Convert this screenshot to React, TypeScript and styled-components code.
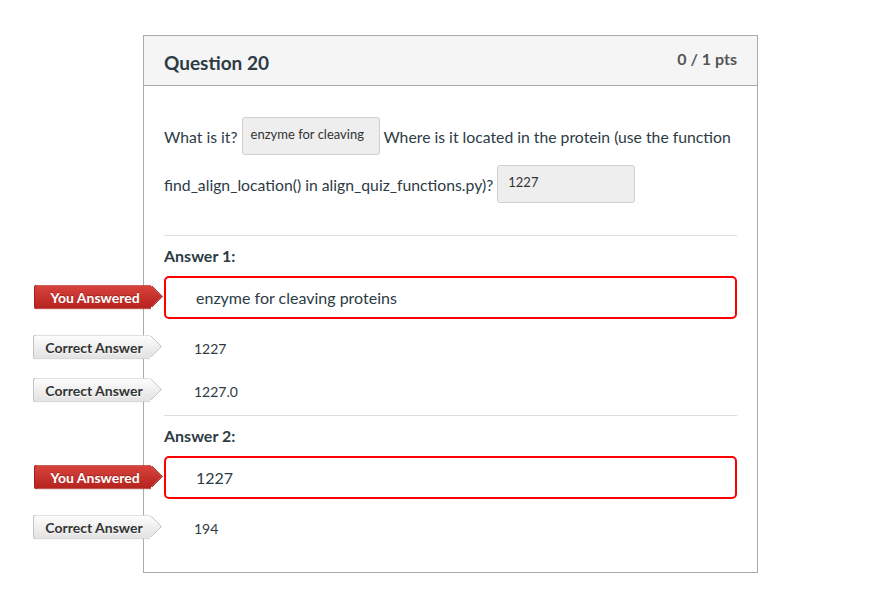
import React from "react";
import styled, { createGlobalStyle, css } from "styled-components";

const Global = createGlobalStyle`
  html, body { margin: 0; padding: 0; background: #ffffff; }
  body { font-family: Lato, "Noto Sans", sans-serif; color: #2d3b45; }
`;

const Page = styled.div`
  padding: 35px 0 0 143px;
`;

const Card = styled.div`
  box-sizing: border-box;
  width: 615px;
  border: 1px solid #aaaaaa;
  background: #ffffff;
`;

const Header = styled.div`
  box-sizing: border-box;
  height: 50px;
  display: flex;
  justify-content: space-between;
  align-items: flex-start;
  padding: 14px 20px 0 20px;
  background: #f5f5f5;
  border-bottom: 1px solid #aaaaaa;
`;

const Title = styled.div`
  font-size: 19px;
  font-weight: 700;
  line-height: 26px;
  color: #2d3b45;
`;

const Points = styled.div`
  font-size: 16px;
  font-weight: 700;
  line-height: 20px;
  color: #555555;
  margin-top: -1px;
`;

const Body = styled.div`
  display: flex;
  flex-direction: column;
  padding: 27px 20px 22px 20px;
`;

const Prompt = styled.div`
  display: flex;
  flex-direction: column;
  margin-bottom: 26px;
  font-size: 15.75px;
  color: #2d3b45;
`;

const PromptLine = styled.div`
  height: 48px;
  line-height: 48px;
  white-space: nowrap;
`;

const Blank = styled.span<{ $pad?: number }>`
  display: inline-block;
  box-sizing: border-box;
  width: 138px;
  height: 38px;
  vertical-align: middle;
  padding: 7px 8px 0 ${(p) => p.$pad ?? 8}px;
  font-size: 13px;
  line-height: 18px;
  white-space: nowrap;
  overflow: hidden;
  background: #eeeeee;
  border: 1px solid #cfcfcf;
  border-radius: 3px;
  color: #333333;
  position: relative;
  top: -3px;
`;

const Section = styled.div`
  display: flex;
  flex-direction: column;
  border-top: 1px solid #dddddd;
  padding: 10px 0 2px 0;
  &:last-child { padding-bottom: 0; }
`;

const Label = styled.div`
  font-size: 16px;
  font-weight: 700;
  line-height: 20px;
  margin-bottom: 10px;
  color: #2d3b45;
`;

const AnswerBox = styled.div`
  position: relative;
  box-sizing: border-box;
  height: 43px;
  display: flex;
  align-items: center;
  padding-left: 30px;
  margin-bottom: 8px;
  border: 2px solid #ff0000;
  border-radius: 5px;
  font-size: 16px;
  color: #2d3b45;
`;

const CorrectRow = styled.div`
  position: relative;
  height: 43px;
  display: flex;
  align-items: center;
  padding-left: 30px;
  font-size: 14px;
  color: #2d3b45;
`;

const redTag = css`
  color: #ffffff;
  text-shadow: 0 -1px 0 rgba(0, 0, 0, 0.25);
  border: 1px solid #a51f1a;
  background: linear-gradient(to bottom, #d8433c, #b5231f);
  &::after {
    border-color: #a51f1a;
    background: linear-gradient(135deg, #d8433c, #b5231f);
  }
`;

const grayTag = css`
  color: #333333;
  text-shadow: 0 1px 0 rgba(255, 255, 255, 0.8);
  border: 1px solid #c4c4c4;
  background: linear-gradient(to bottom, #fdfdfd, #e2e2e2);
  &::after {
    border-color: #c4c4c4;
    background: linear-gradient(135deg, #fdfdfd, #e2e2e2);
  }
`;

const Tag = styled.div<{ $kind: "you" | "correct"; $shift: number }>`
  position: absolute;
  right: calc(100% + ${(p) => p.$shift}px);
  top: 50%;
  transform: translateY(-50%);
  margin-top: ${(p) => (p.$kind === "you" ? -1 : -2)}px;
  box-sizing: border-box;
  width: 117px;
  height: 25px;
  line-height: 23px;
  padding-left: 4px;
  text-align: center;
  font-size: 14px;
  font-weight: 700;
  border-radius: 3px 0 0 3px;
  border-right: none !important;
  z-index: 1;
  &::after {
    content: "";
    position: absolute;
    top: 3px;
    right: -9px;
    width: 16px;
    height: 16px;
    box-sizing: border-box;
    border-style: solid;
    border-width: 1px 1px 0 0;
    transform: rotate(45deg);
    border-radius: 0 2px 0 0;
    z-index: -1;
  }
  ${(p) => (p.$kind === "you" ? redTag : grayTag)}
`;

const TagText = styled.span`
  position: relative;
  z-index: 2;
`;

type Answer = { label: string; given: string; correct: string[] };

const answers: Answer[] = [
  { label: "Answer 1:", given: "enzyme for cleaving proteins", correct: ["1227", "1227.0"] },
  { label: "Answer 2:", given: "1227", correct: ["194"] },
];

export default function App() {
  return (
    <>
      <Global />
      <Page>
        <Card>
          <Header>
            <Title>Question 20</Title>
            <Points>0 / 1 pts</Points>
          </Header>
          <Body>
            <Prompt>
              <PromptLine>
                What is it? <Blank>enzyme for cleaving</Blank> Where is it located in the protein (use the function
              </PromptLine>
              <PromptLine>
                find_align_location() in align_quiz_functions.py)? <Blank $pad={10}>1227</Blank>
              </PromptLine>
            </Prompt>
            {answers.map((a) => (
              <Section key={a.label}>
                <Label>{a.label}</Label>
                <AnswerBox>
                  <Tag $kind="you" $shift={15}>
                    <TagText>You Answered</TagText>
                  </Tag>
                  {a.given}
                </AnswerBox>
                {a.correct.map((c) => (
                  <CorrectRow key={c}>
                    <Tag $kind="correct" $shift={14}>
                      <TagText>Correct Answer</TagText>
                    </Tag>
                    {c}
                  </CorrectRow>
                ))}
              </Section>
            ))}
          </Body>
        </Card>
      </Page>
    </>
  );
}
